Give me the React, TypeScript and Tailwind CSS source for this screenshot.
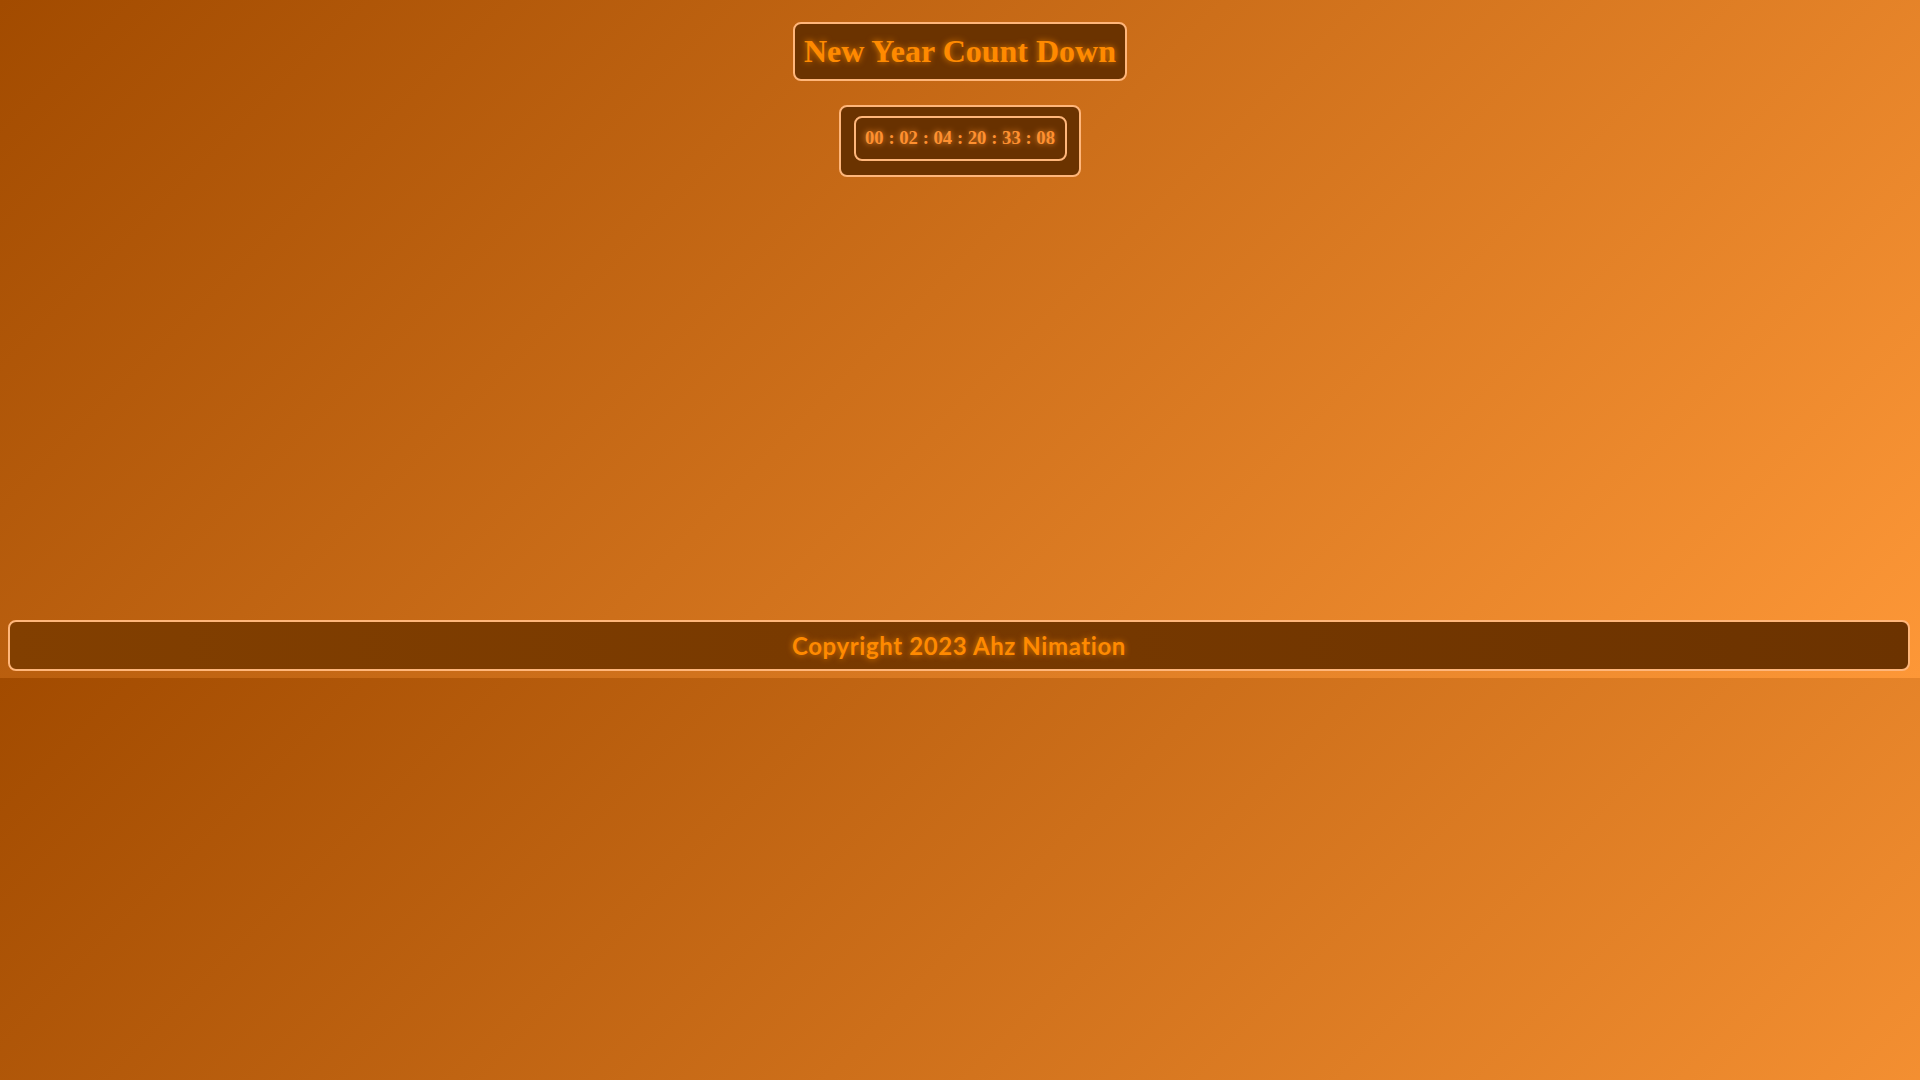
import React from 'react';

const time = ['00', '02', '04', '20', '33', '08'];

export default function App() {
  return (
    <div className="h-[1080px] w-full overflow-hidden bg-[linear-gradient(135deg,#a24b00,#fd9737)] bg-[length:100%_678px] bg-repeat-y">
      <div className="flex h-[678px] flex-col items-center">
        {/* title */}
        <div className="mt-[22px] flex h-[59px] w-[334px] items-center justify-center rounded-[8px] border-2 border-[#ffb67a] bg-[#6b3300] pb-[2px]">
          <h1 className="font-['Liberation_Serif',serif] text-[32px] font-bold leading-none text-[#ff8a00] [text-shadow:0_0_6px_rgba(255,140,0,0.8)]">
            New Year Count Down
          </h1>
        </div>

        {/* countdown */}
        <div className="mt-[24px] flex h-[72px] w-[242px] flex-col items-center rounded-[8px] border-2 border-[#ffb67a] bg-[#6b3300] pt-[9px]">
          <div className="flex h-[45px] w-[213px] items-center justify-center rounded-[8px] border-2 border-[#ffb67a] bg-[#683100]">
            <h3 className="font-['Liberation_Serif',serif] text-[18.7px] font-bold leading-none text-[#ff9030] [text-shadow:0_0_6px_rgba(255,150,50,0.9)]">
              {time.join(' : ')}
            </h3>
          </div>
        </div>

        <div className="flex-1" />

        {/* footer */}
        <footer className="mb-[7px] ml-[8px] mr-[10px] flex h-[51px] items-center justify-center self-stretch rounded-[8px] border-2 border-[#ffb67a] bg-[linear-gradient(90deg,#823f00,#6c3300)]">
          <p className="font-['Lato',sans-serif] text-[24px] font-bold leading-none tracking-[0.6px] text-[#ff8a00] [text-shadow:0_0_6px_rgba(255,140,0,0.8)]">
            Copyright 2023 Ahz Nimation
          </p>
        </footer>
      </div>
    </div>
  );
}
